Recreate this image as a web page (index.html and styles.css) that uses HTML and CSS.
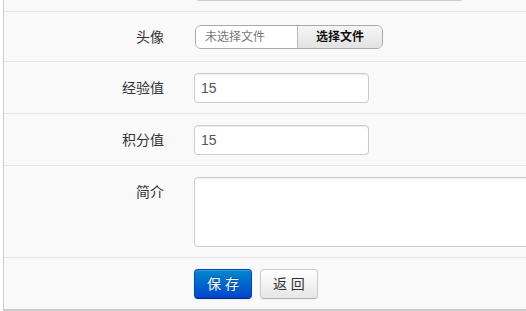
FILE: index.html
```html
<!DOCTYPE html>
<html lang="zh-CN">
<head>
  <meta charset="UTF-8">
  <title>编辑资料</title>
  <link rel="stylesheet" href="styles.css">
</head>
<body>

  <form class="panel">
    <div class="row">
      <span class="label"></span>
      <div class="control"><input type="text" class="input input-long"></div>
    </div>

    <div class="row row-file">
      <label class="label">头像</label>
      <div class="control">
        <div class="file">
          <span class="file-name">未选择文件</span>
          <span class="file-btn">选择文件</span>
        </div>
      </div>
    </div>

    <div class="row">
      <label class="label">经验值</label>
      <div class="control"><input type="text" class="input" value="15"></div>
    </div>

    <div class="row">
      <label class="label">积分值</label>
      <div class="control"><input type="text" class="input" value="15"></div>
    </div>

    <div class="row">
      <label class="label">简介</label>
      <div class="control"><textarea class="input textarea"></textarea></div>
    </div>

    <div class="row row-actions">
      <span></span>
      <div class="control actions">
        <button type="button" class="btn btn-primary">保 存</button>
        <button type="button" class="btn">返 回</button>
      </div>
    </div>
  </form>

</body>
</html>
```

FILE: styles.css
```css
body { margin: 0; padding-left: 3px; background: #fff; overflow: hidden; font-family: "Liberation Sans", "Noto Sans CJK SC", sans-serif; font-size: 14px; line-height: 20px; color: #333; }

.panel { width: 720px; margin-top: -40px; background: #f9f9f9; border-left: 1px solid #ccc; border-bottom: 2px solid #ccc; }

.row { display: grid; grid-template-columns: 160px 1fr; column-gap: 30px; padding: 11px 0 10px; border-bottom: 1px solid #e6e6e6; }
.row-file { padding: 13px 0 12px; }
.row-actions { border-bottom: none; }

.label { text-align: right; padding-top: 5px; color: #333; }
.row-file .label { padding-top: 2px; }

.input { box-sizing: border-box; width: 175px; height: 30px; margin: 0; padding: 4px 6px; border: 1px solid #ccc; border-radius: 4px; background: #fff; box-shadow: inset 0 1px 1px rgba(0,0,0,0.075); font-family: "Liberation Sans", "Noto Sans CJK SC", sans-serif; font-size: 14px; line-height: 20px; color: #555; }
.input-long { width: 269px; margin-left: 1px; }
.textarea { display: block; width: 520px; height: 70px; resize: none; }

.file { display: flex; width: 188px; height: 24px; margin-left: 1px; box-sizing: border-box; border: 1px solid #aaa; border-radius: 6px; overflow: hidden; font-size: 12px; line-height: 22px; }
.file-name { box-sizing: border-box; width: 102px; padding-left: 9px; background: #fff; color: #777; border-right: 1px solid #bbb; }
.file-btn { flex: 1; text-align: center; font-weight: bold; color: #111; background: linear-gradient(#f6f6f6, #e2e2e2); }

.actions { display: flex; gap: 8px; }
.btn { height: 30px; padding: 4px 12px; border: 1px solid #ccc; border-bottom-color: #b3b3b3; border-radius: 4px; background: linear-gradient(#fff, #e6e6e6); box-shadow: inset 0 1px 0 rgba(255,255,255,0.2), 0 1px 2px rgba(0,0,0,0.05); font-family: "Liberation Sans", "Noto Sans CJK SC", sans-serif; font-size: 14px; line-height: 20px; color: #333; cursor: pointer; }
.btn-primary { color: #fff; border-color: #0044cc #0044cc #002a80; background: linear-gradient(#0088cc, #0044cc); text-shadow: 0 -1px 0 rgba(0,0,0,0.25); }
```
